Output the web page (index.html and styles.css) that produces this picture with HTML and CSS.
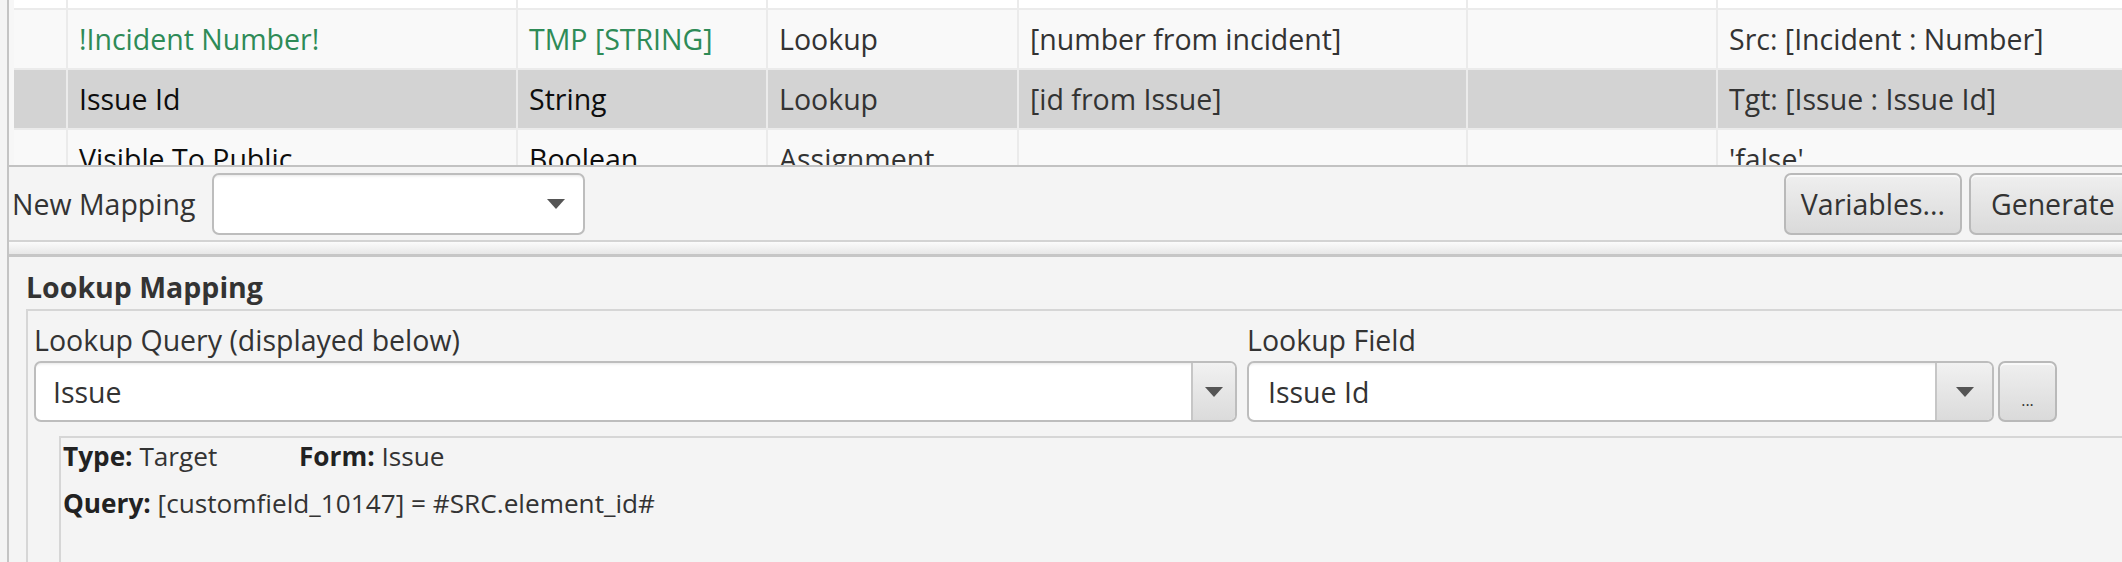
FILE: index.html
```html
<!DOCTYPE html>
<html lang="en">
<head>
  <meta charset="UTF-8">
  <meta name="viewport" content="width=device-width, initial-scale=1.0">
  <title>Mapping Editor</title>
  <link rel="stylesheet" href="styles.css">
</head>
<body>

<div class="window">
  <div class="mapping-table">
    <div class="row row-cut">
      <div class="cell c0"></div>
      <div class="cell c1"></div>
      <div class="cell c2"></div>
      <div class="cell c3"></div>
      <div class="cell c4"></div>
      <div class="cell c5"></div>
      <div class="cell c6"></div>
    </div>
    <div class="row row-odd">
      <div class="cell c0"></div>
      <div class="cell c1 temp">!Incident Number!</div>
      <div class="cell c2 temp">TMP [STRING]</div>
      <div class="cell c3">Lookup</div>
      <div class="cell c4">[number from incident]</div>
      <div class="cell c5"></div>
      <div class="cell c6">Src: [Incident : Number]</div>
    </div>
    <div class="row row-selected">
      <div class="cell c0"></div>
      <div class="cell c1 strong">Issue Id</div>
      <div class="cell c2 strong">String</div>
      <div class="cell c3">Lookup</div>
      <div class="cell c4">[id from Issue]</div>
      <div class="cell c5"></div>
      <div class="cell c6">Tgt: [Issue : Issue Id]</div>
    </div>
    <div class="row row-odd">
      <div class="cell c0"></div>
      <div class="cell c1 strong">Visible To Public</div>
      <div class="cell c2 strong">Boolean</div>
      <div class="cell c3">Assignment</div>
      <div class="cell c4"></div>
      <div class="cell c5"></div>
      <div class="cell c6">'false'</div>
    </div>
  </div>

  <div class="toolbar">
    <label class="toolbar-label">New Mapping</label>
    <div class="combo combo-plain">
      <span class="combo-value"></span>
      <span class="combo-arrow"><i class="arrow"></i></span>
    </div>
    <div class="toolbar-buttons">
      <button class="btn btn-variables">Variables...</button>
      <button class="btn">Generate Data Map</button>
    </div>
  </div>

  <div class="divider"></div>

  <div class="editor">
    <h3 class="editor-title">Lookup Mapping</h3>
    <div class="editor-box">
      <div class="fields">
        <div class="field field-query">
          <label>Lookup Query (displayed below)</label>
          <div class="combo">
            <span class="combo-value">Issue</span>
            <span class="combo-arrow"><i class="arrow"></i></span>
          </div>
        </div>
        <div class="field field-lookup">
          <label>Lookup Field</label>
          <div class="field-row">
            <div class="combo combo-lookup">
              <span class="combo-value">Issue Id</span>
              <span class="combo-arrow"><i class="arrow"></i></span>
            </div>
            <button class="btn btn-more">...</button>
          </div>
        </div>
      </div>
      <div class="details">
        <div class="details-row">
          <span class="detail-type"><b>Type:</b> Target</span>
          <span><b>Form:</b> Issue</span>
        </div>
        <div class="details-row">
          <span><b>Query:</b> [customfield_10147] = #SRC.element_id#</span>
        </div>
      </div>
    </div>
  </div>
</div>

</body>
</html>
```

FILE: styles.css
```css
html, body {
  margin: 0;
  padding: 0;
  height: 562px;
  overflow: hidden;
  background-color: #f4f4f4;
}
body {
  font-family: "Open Sans", "Noto Sans", sans-serif;
  font-size: 28.5px;
  color: #333;
}
* {
  box-sizing: border-box;
}
.window {
  margin-left: 7px;
  width: 2273px;
  height: 562px;
  border-left: 2px solid #c4c4c4;
}

/* table */
.mapping-table {
  height: 167px;
  padding-left: 5px;
  background-color: #f7f7f7;
  border-bottom: 2px solid #c2c2c2;
  overflow: hidden;
}
.row {
  display: flex;
  height: 60px;
  border-bottom: 2px solid #ebebeb;
  background-color: #fff;
}
.row-cut {
  height: 10px;
}
.row-odd {
  background-color: #f9f9f9;
}
.row-selected {
  background-color: #d3d3d3;
}
.cell {
  display: flex;
  align-items: center;
  flex-shrink: 0;
  padding-left: 11px;
  border-right: 2px solid #ebebeb;
  white-space: nowrap;
  overflow: hidden;
}
.c0 { width: 54px; }
.c1 { width: 450px; }
.c2 { width: 250px; }
.c3 { width: 251px; }
.c4 { width: 449px; }
.c5 { width: 250px; }
.c6 { width: 520px; }
.temp {
  color: #2e8b57;
}
.strong {
  color: #0d0d0d;
}

/* toolbar */
.toolbar {
  display: flex;
  align-items: center;
  height: 73px;
  padding: 0 7px 0 3px;
}
.toolbar-label {
  margin-right: 17px;
}
.toolbar-buttons {
  display: flex;
  gap: 7px;
  margin-left: auto;
}
.btn {
  height: 62px;
  padding: 0 20px;
  font-family: inherit;
  font-size: 28.5px;
  color: #333;
  border: 2px solid #b9b9b9;
  border-radius: 7px;
  background: linear-gradient(#efefef, #dadada);
  box-shadow: inset 0 2px 0 #f9f9f9;
}
.btn-variables {
  width: 178px;
  padding: 0;
}

/* combo boxes */
.combo {
  display: flex;
  height: 61px;
  background-color: #fff;
  border: 2px solid #bdbdbd;
  border-radius: 7px;
  box-shadow: inset 0 4px 3px -3px rgba(0,0,0,0.10);
  overflow: hidden;
}
.combo-plain {
  width: 373px;
  height: 62px;
}
.combo-value {
  flex: 1;
  display: flex;
  align-items: center;
  padding-left: 17px;
  color: #333;
}
.combo-arrow {
  display: flex;
  align-items: center;
  justify-content: center;
  width: 44px;
  border-left: 2px solid #c6c6c6;
  background: linear-gradient(#f1f1f1, #dbdbdb);
}
.combo-plain .combo-arrow {
  border-left: none;
  background: none;
  width: 54px;
}
.combo-lookup .combo-arrow {
  width: 57px;
}
.arrow {
  width: 0;
  height: 0;
  border-left: 9px solid transparent;
  border-right: 9px solid transparent;
  border-top: 10px solid #555;
}

/* splitter */
.divider {
  height: 17px;
  border-top: 2px solid #d3d3d3;
  border-bottom: 3px solid #c6c6c6;
  background: linear-gradient(#fbfbfb, #e7e7e7);
}

/* editor panel */
.editor {
  padding: 10px 0 0 17px;
}
.editor-title {
  margin: 0 0 2px 0;
  font-size: 28.5px;
  line-height: 40px;
  font-weight: bold;
  color: #333;
}
.editor-box {
  border-top: 2px solid #d6d6d6;
  border-left: 2px solid #d6d6d6;
  padding: 9px 0 0 6px;
  height: 260px;
}
.fields {
  display: flex;
  gap: 10px;
}
.field label {
  display: block;
  line-height: 40px;
  margin-bottom: 1px;
}
.field-query {
  width: 1203px;
}
.field-lookup {
  width: 810px;
}
.field-row {
  display: flex;
  gap: 4px;
}
.combo-lookup {
  width: 747px;
}
.field-lookup .combo-value {
  padding-left: 19px;
}
.btn-more {
  width: 59px;
  height: 61px;
  padding: 16px 0 0 0;
  font-size: 16px;
}

.details {
  margin: 14px 0 0 25px;
  padding: 0 0 0 2px;
  height: 160px;
  border-top: 2px solid #d6d6d6;
  border-left: 2px solid #d6d6d6;
  font-size: 26.2px;
}
.details-row {
  display: flex;
  line-height: 36px;
  margin-bottom: 11px;
}
.details b {
  color: #222;
}
.detail-type {
  width: 236px;
}
```
